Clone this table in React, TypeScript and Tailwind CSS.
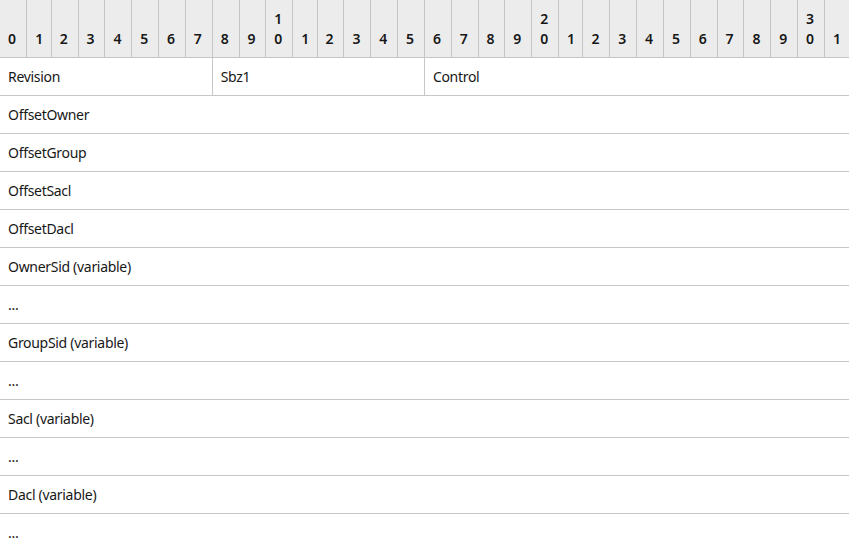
const bits = Array.from({ length: 32 }, (_, i) => i);

const rows = [
  "OffsetOwner",
  "OffsetGroup",
  "OffsetSacl",
  "OffsetDacl",
  "OwnerSid (variable)",
  "...",
  "GroupSid (variable)",
  "...",
  "Sacl (variable)",
  "...",
  "Dacl (variable)",
  "...",
];

const cell = "border-b border-[#c6c6c6] px-2 leading-[21px] tracking-[-0.3px]";

export default function App() {
  return (
    <div className="w-[849px] h-[551px] overflow-hidden bg-white text-[#171717] font-['Noto_Sans','Open_Sans',sans-serif] text-[14px]">
      <table className="w-full table-fixed border-collapse">
        <colgroup>
          {bits.map((b) => (
            <col key={b} className={b % 10 === 1 ? "w-[24.4px]" : ""} />
          ))}
        </colgroup>
        <thead>
          <tr className="h-[57px]">
            {bits.map((b) => (
              <th
                key={b}
                className={`bg-[#ececec] border-b border-[#c6c6c6] px-2 py-2 align-bottom text-left font-semibold leading-[20px] ${
                  b < 31 ? "border-r" : ""
                }`}
              >
                {b >= 10 && b % 10 === 0 ? (
                  <>
                    {b / 10}
                    <br />0
                  </>
                ) : (
                  b % 10
                )}
              </th>
            ))}
          </tr>
        </thead>
        <tbody>
          <tr className="h-[38px]">
            <td colSpan={8} className={`${cell} border-r`}>
              Revision
            </td>
            <td colSpan={8} className={`${cell} border-r`}>
              Sbz1
            </td>
            <td colSpan={16} className={cell}>
              Control
            </td>
          </tr>
          {rows.map((r, i) => (
            <tr key={i} className="h-[38px]">
              <td colSpan={32} className={cell}>
                {r}
              </td>
            </tr>
          ))}
        </tbody>
      </table>
    </div>
  );
}
